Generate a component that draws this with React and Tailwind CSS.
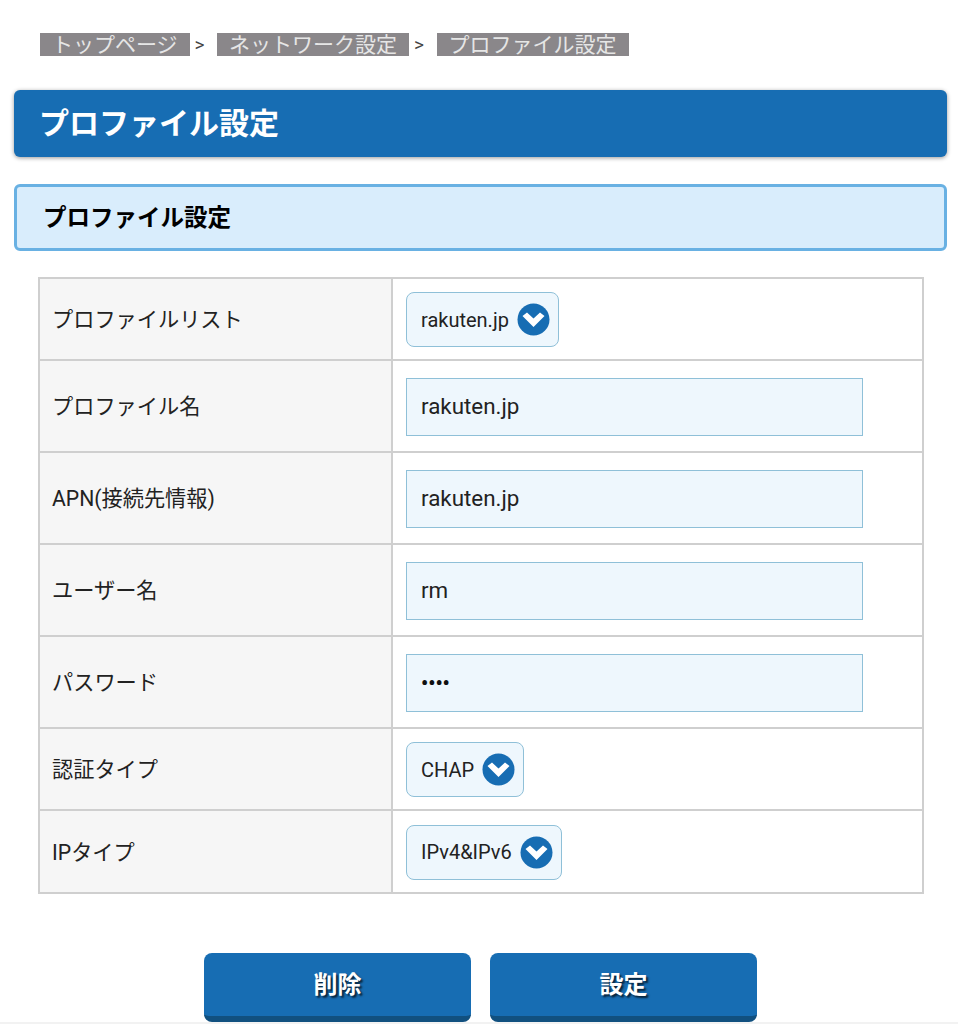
import React from 'react';

const fontStack = "font-['Roboto','Noto_Sans_CJK_JP',sans-serif]";

const crumbs = ['トップページ', 'ネットワーク設定', 'プロファイル設定'];

const rows = [
    { label: 'プロファイルリスト', type: 'select', value: 'rakuten.jp', height: 'h-[82px]' },
    { label: 'プロファイル名', type: 'input', value: 'rakuten.jp', height: 'h-[92px]' },
    { label: 'APN(接続先情報)', type: 'input', value: 'rakuten.jp', height: 'h-[92px]' },
    { label: 'ユーザー名', type: 'input', value: 'rm', height: 'h-[92px]' },
    { label: 'パスワード', type: 'password', value: '••••', height: 'h-[92px]' },
    { label: '認証タイプ', type: 'select', value: 'CHAP', height: 'h-[82px]' },
    { label: 'IPタイプ', type: 'select', value: 'IPv4&IPv6', height: 'h-[83px]' },
];

// wide flat chevron in a filled circle, the package chevrons are too narrow
const SelectIcon = () => (
    <svg width="33" height="33" viewBox="0 0 33 33">
        <circle cx="16.5" cy="16.5" r="16" fill="#176db3" />
        <path d="M5.5 13 L10 9.5 L16.5 15.5 L23 9.5 L27.5 13 L16.5 24 Z" fill="#fff" />
    </svg>
);

const SelectBox = ({ value }) => (
    <div className="inline-flex h-[55px] items-center gap-[8px] rounded-[8px] border border-[#8fc0d8] bg-[#eef7fd] pl-[14px] pr-[8px]">
        <span className="text-[20px] text-[#222]">{value}</span>
        <SelectIcon />
    </div>
);

const TextBox = ({ value, password }) => (
    <div className="flex h-[58px] w-[457px] items-center border border-[#8fc0d8] bg-[#eef7fd] pl-[14px]">
        <span className={password ? 'text-[20px] font-bold text-[#111]' : 'text-[22.4px] text-[#222]'}>{value}</span>
    </div>
);

const App = () => {
    return (
        <div className={`${fontStack} h-[1024px] w-[958px] overflow-hidden bg-white`}>
            <nav className="flex h-[90px] items-start pl-[40px] pt-[33px]">
                {crumbs.map((c, i) => (
                    <React.Fragment key={c}>
                        <span className="h-[23px] bg-[#8a878a] px-[12px] text-[21px] leading-[24px] text-[#e6e6e6]">{c}</span>
                        {i < crumbs.length - 1 && (
                            <span className="w-[27.5px] pl-[5px] text-[19px] leading-[24px] text-[#444]">&gt;</span>
                        )}
                    </React.Fragment>
                ))}
            </nav>

            <h1 className="mx-[14px] flex h-[67px] w-[933px] items-center rounded-[6px] bg-[#176db3] pl-[25px] text-[30px] font-bold text-white shadow-[0_1px_4px_rgba(0,0,0,0.4)]">
                プロファイル設定
            </h1>

            <h2 className="ml-[14px] mt-[27px] flex h-[67px] w-[933px] items-center rounded-[6px] border-[3px] border-[#69b1e3] bg-[#d9edfc] pl-[26px] pt-[3px] text-[23.5px] font-bold text-black">
                プロファイル設定
            </h2>

            <div className="ml-[38px] mt-[26px] w-[886px] border-x-2 border-t-2 border-[#cfcfcf]">
                {rows.map((r) => (
                    <div key={r.label} className={`flex ${r.height} border-b-2 border-[#cfcfcf]`}>
                        <div className="flex w-[353px] items-center border-r-2 border-[#cfcfcf] bg-[#f6f6f6] pl-[12px] pt-[2px] text-[21.2px] text-[#222]">
                            {r.label}
                        </div>
                        <div className="flex flex-1 items-center bg-white pl-[13px] pt-[1px]">
                            {r.type === 'select' ? (
                                <SelectBox value={r.value} />
                            ) : (
                                <TextBox value={r.value} password={r.type === 'password'} />
                            )}
                        </div>
                    </div>
                ))}
            </div>

            <div className="mt-[59px] flex justify-center gap-[19px] pl-[3px]">
                {['削除', '設定'].map((b) => (
                    <button
                        key={b}
                        className="h-[69px] w-[267px] rounded-[8px] border-b-[6px] border-[#11507f] bg-[#176db3] text-[24px] font-bold text-white [text-shadow:2px_2px_2px_rgba(0,0,0,0.7)]"
                    >
                        {b}
                    </button>
                ))}
            </div>
            <div className="h-[2px] bg-[#f2f2f2]" />
        </div>
    );
};

export default App;
